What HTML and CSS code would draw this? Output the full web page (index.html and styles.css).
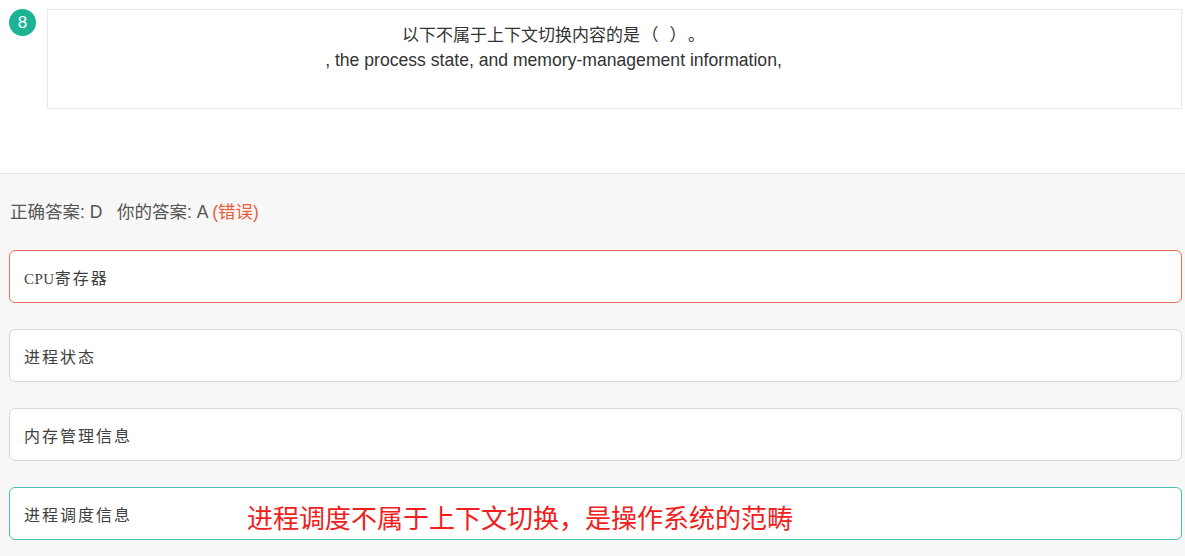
FILE: index.html
```html
<!DOCTYPE html>
<html lang="zh">
<head>
<meta charset="utf-8">
<link rel="stylesheet" href="styles.css">
</head>
<body>
<div class="question">
  <div class="badge">8</div>
  <div class="stem">
    <p class="stem-cn">以下不属于上下文切换内容的是<span class="paren">（</span><span class="gap"> </span><span class="paren">）</span>。</p>
    <p class="stem-en">, the process state, and memory-management information,</p>
  </div>
</div>
<div class="answers">
  <div class="result">正确答案: D&nbsp;&nbsp; 你的答案: A <span class="wrong">(错误)</span></div>
  <div class="option option-wrong"><span class="label"><span class="serif">CPU</span>寄存器</span></div>
  <div class="option"><span class="label">进程状态</span></div>
  <div class="option"><span class="label">内存管理信息</span></div>
  <div class="option option-right"><span class="label">进程调度信息</span><span class="note">进程调度不属于上下文切换，是操作系统的范畴</span></div>
</div>
</body>
</html>
```
FILE: styles.css
```css
html, body {
  margin: 0;
  padding: 0;
  background: #f7f7f7;
  font-family: "Liberation Sans", "Noto Sans CJK SC", sans-serif;
  color: #333;
}
.question {
  background: #fff;
  height: 164px;
  padding: 9px 3px 0 9px;
  display: flex;
  align-items: flex-start;
  gap: 11px;
}
.badge {
  width: 27px;
  height: 27px;
  border-radius: 50%;
  background: #1bb394;
  color: #fff;
  font-size: 17px;
  line-height: 27px;
  text-align: center;
  flex: none;
}
.stem {
  flex: 1;
  height: 98px;
  border: 1px solid #e8e8e8;
  box-sizing: content-box;
  padding: 0 122px 0 0;
  text-align: center;
}
.stem p {
  margin: 0;
  line-height: 25px;
  color: #333;
}
.stem-cn {
  margin-top: 13px !important;
  font-size: 17px;
}
.paren {
  display: inline-block;
  width: 20px;
  text-align: center;
}
.gap {
  display: inline-block;
  width: 8px;
}
.stem-en {
  font-size: 17.6px;
}
.answers {
  border-top: 1px solid #e6e6e6;
  padding: 26px 3px 16px 9px;
}
.result {
  font-size: 17.5px;
  line-height: 24px;
  color: #555;
  padding-left: 1px;
  margin-bottom: 26px;
}
.wrong {
  color: #e8603c;
}
.option {
  position: relative;
  height: 51px;
  border: 1px solid #d9d9d9;
  border-radius: 6px;
  background: #fff;
  margin-bottom: 26px;
  padding-left: 14px;
  display: flex;
  align-items: center;
  font-size: 16px;
  letter-spacing: 2px;
  color: #404040;
}
.option-wrong {
  border-color: #e8735a;
}
.option-right {
  border-color: #48c0ae;
}
.serif {
  font-family: "Liberation Serif", serif;
  letter-spacing: 0.5px;
  font-size: 15px;
}
.note {
  position: absolute;
  left: 237px;
  top: 11px;
  font-size: 26px;
  letter-spacing: 0;
  color: #f02020;
  line-height: 40px;
}
```
